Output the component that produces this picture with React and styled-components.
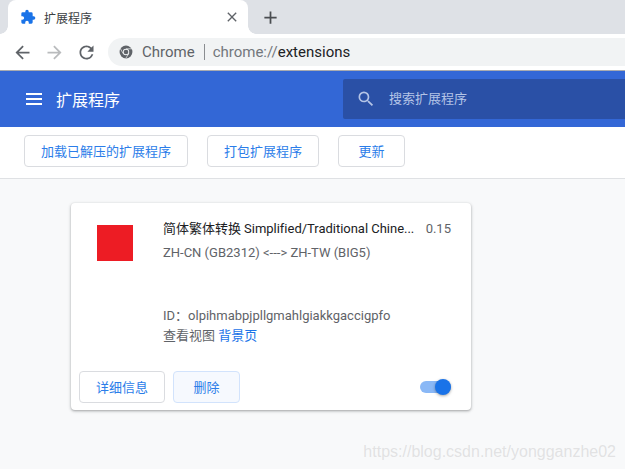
import React from "react";
import styled, { createGlobalStyle } from "styled-components";

const cjk = `Roboto, "Noto Sans CJK SC", sans-serif`;

const GlobalStyle = createGlobalStyle`
  html, body {
    margin: 0;
    padding: 0;
    background: #f8f9fa;
    overflow: hidden;
  }
  * {
    box-sizing: border-box;
  }
`;

const Page = styled.div`
  position: relative;
  width: 625px;
  height: 469px;
  overflow: hidden;
  font-family: ${cjk};
  display: flex;
  flex-direction: column;
`;

const TabStrip = styled.div`
  height: 34px;
  background: #dee1e6;
  display: flex;
  align-items: flex-start;
  padding-left: 8px;
`;

const Tab = styled.div`
  position: relative;
  width: 240px;
  height: 34px;
  background: #fff;
  border-radius: 8px 8px 0 0;
  display: flex;
  align-items: center;
  padding: 0 8px 0 12px;
  font-size: 12px;
  color: #3c4043;

  &::before,
  &::after {
    content: "";
    position: absolute;
    bottom: 0;
    width: 8px;
    height: 8px;
  }

  &::before {
    left: -8px;
    background: radial-gradient(circle at 0 0, transparent 7.5px, #fff 8px);
  }

  &::after {
    right: -8px;
    background: radial-gradient(circle at 100% 0, transparent 7.5px, #fff 8px);
  }
`;

const TabTitle = styled.span`
  margin-left: 8px;
  flex: 1;
`;

const NewTab = styled.div`
  width: 44px;
  height: 34px;
  display: flex;
  align-items: center;
  justify-content: center;
`;

const Toolbar = styled.div`
  height: 37px;
  background: #fff;
  border-bottom: 1px solid #a9abb0;
  display: flex;
  align-items: flex-start;
  padding: 4px 0 0 12px;
`;

const NavButton = styled.div`
  width: 32px;
  height: 28px;
  display: flex;
  align-items: center;
`;

const Omnibox = styled.div`
  flex: 1;
  height: 28px;
  background: #f1f3f4;
  border-radius: 14px 0 0 14px;
  display: flex;
  align-items: center;
  padding-left: 11px;
  font-size: 15px;
`;

const Origin = styled.span`
  margin-left: 9px;
  color: #5f6368;
`;

const Divider = styled.span`
  width: 1px;
  height: 16px;
  background: #8a8d91;
  margin: 0 8px 0 9px;
`;

const UrlScheme = styled.span`
  color: #73777c;
`;

const UrlPath = styled.span`
  color: #202124;
`;

const Header = styled.header`
  height: 56px;
  background: #3367d6;
  display: flex;
  align-items: center;
  padding-left: 26px;
  color: #fff;
`;

const HeaderTitle = styled.h1`
  margin: 0 0 0 14px;
  width: 287px;
  font-size: 16px;
  font-weight: 400;
`;

const SearchBox = styled.div`
  flex: 1;
  height: 40px;
  background: #2a50a6;
  border-radius: 2px 0 0 2px;
  display: flex;
  align-items: center;
  padding-left: 13px;
  color: #b4c4e6;
  font-size: 13px;
`;

const SearchLabel = styled.span`
  margin-left: 13px;
  padding-bottom: 4px;
`;

const ActionBar = styled.div`
  height: 52px;
  background: #fff;
  border-bottom: 1px solid #dfe1e4;
  display: flex;
  align-items: flex-start;
  gap: 19px;
  padding: 8px 0 0 24px;
`;

const Button = styled.button`
  height: 32px;
  width: ${(props) => props.$width}px;
  padding: 0;
  background: ${(props) => (props.$tinted ? "#f6f9fe" : "#fff")};
  border: 1px solid ${(props) => (props.$tinted ? "#d2e3fc" : "#dadce0")};
  border-radius: 4px;
  color: #2b7de9;
  font-family: ${cjk};
  font-size: 13px;
  line-height: 1;
`;

const Content = styled.main`
  flex: 1;
  padding: 24px 0 0 71px;
`;

const Card = styled.section`
  width: 400px;
  height: 207px;
  background: #fff;
  border-radius: 4px;
  box-shadow: 0 1px 2px rgba(60, 64, 67, 0.3), 0 1px 3px 1px rgba(60, 64, 67, 0.15);
  display: flex;
  flex-direction: column;
`;

const CardMain = styled.div`
  flex: 1;
  display: flex;
  padding: 22px 20px 0 26px;
`;

const ExtensionIcon = styled.div`
  width: 36px;
  height: 36px;
  background: #ed1c24;
  flex: none;
`;

const Details = styled.div`
  margin-left: 30px;
  min-width: 0;
  flex: 1;
  margin-top: -6px;
`;

const TitleRow = styled.div`
  display: flex;
  justify-content: space-between;
  line-height: 20px;
  height: 20px;
`;

const Name = styled.span`
  font-size: 13px;
  letter-spacing: -0.02px;
  color: #202124;
  white-space: nowrap;
`;

const Version = styled.span`
  font-size: 13px;
  color: #5f6368;
`;

const Description = styled.div`
  margin-top: 4px;
  font-size: 13px;
  line-height: 20px;
  color: #5f6368;
`;

const ExtensionId = styled.div`
  margin-top: 43px;
  font-size: 13px;
  line-height: 20px;
  color: #5f6368;
`;

const Views = styled.div`
  font-size: 13px;
  line-height: 20px;
  color: #5f6368;
`;

const ViewLink = styled.a`
  color: #1a73e8;
`;

const CardFooter = styled.div`
  height: 39px;
  display: flex;
  align-items: flex-start;
  gap: 8px;
  padding: 0 20px 0 8px;
`;

const Toggle = styled.div`
  position: relative;
  margin: 10px 0 0 auto;
  width: 31px;
  height: 12px;
  background: #8ab8f6;
  border-radius: 6px;
`;

const Knob = styled.div`
  position: absolute;
  top: -2px;
  right: 0;
  width: 16px;
  height: 16px;
  background: #1a73e8;
  border-radius: 50%;
  box-shadow: 0 1px 3px rgba(0, 0, 0, 0.35);
`;

const Watermark = styled.div`
  position: absolute;
  right: 9px;
  bottom: 8px;
  font-family: "Liberation Sans", sans-serif;
  font-size: 16px;
  color: rgba(190, 190, 190, 0.4);
`;

const Glyph = ({ d, size = 21, color = "#5f6368" }) => (
  <svg width={size} height={size} viewBox="0 0 24 24" fill={color}>
    <path d={d} />
  </svg>
);

const icons = {
  back: "M20 11H7.83l5.59-5.59L12 4l-8 8 8 8 1.41-1.41L7.83 13H20v-2z",
  forward: "M12 4l-1.41 1.41L16.17 11H4v2h12.17l-5.58 5.59L12 20l8-8z",
  reload:
    "M17.65 6.35A7.958 7.958 0 0 0 12 4c-4.42 0-7.99 3.58-7.99 8s3.57 8 7.99 8c3.73 0 6.84-2.55 7.73-6h-2.08A5.99 5.99 0 0 1 12 18c-3.31 0-6-2.69-6-6s2.69-6 6-6c1.66 0 3.14.69 4.22 1.78L13 11h7V4l-2.35 2.35z",
  close: "M19 6.41 17.59 5 12 10.59 6.41 5 5 6.41 10.59 12 5 17.59 6.41 19 12 13.41 17.59 19 19 17.59 13.41 12z",
  plus: "M19 13h-6v6h-2v-6H5v-2h6V5h2v6h6v2z",
  menu: "M0 3h24v3H0zM0 10.5h24v3H0zM0 18h24v3H0z",
  search:
    "M15.5 14h-.79l-.28-.27A6.47 6.47 0 0 0 16 9.5 6.5 6.5 0 1 0 9.5 16c1.61 0 3.09-.59 4.23-1.57l.27.28v.79l5 4.99L20.49 19l-4.99-5zm-6 0C7.01 14 5 11.99 5 9.5S7.01 5 9.5 5 14 7.01 14 9.5 11.99 14 9.5 14z",
  puzzle:
    "M20.5 11H19V7a2 2 0 0 0-2-2h-4V3.5a2.5 2.5 0 0 0-5 0V5H4a2 2 0 0 0-2 2v3.8h1.5a2.7 2.7 0 0 1 0 5.4H2V20a2 2 0 0 0 2 2h3.8v-1.5a2.7 2.7 0 0 1 5.4 0V22H17a2 2 0 0 0 2-2v-4h1.5a2.5 2.5 0 0 0 0-5z",
};

const ChromeIcon = () => (
  <svg width="14" height="14" viewBox="0 0 24 24">
    <circle cx="12" cy="12" r="11" fill="#5f6368" />
    <circle cx="12" cy="12" r="5.5" fill="#f1f3f4" />
    <circle cx="12" cy="12" r="4" fill="#5f6368" />
    <path d="M12 6.5h10M7.2 14.8 2.5 6.5M16.8 14.8 11.5 23" stroke="#f1f3f4" strokeWidth="1.2" />
  </svg>
);

const App = () => (
  <Page>
    <GlobalStyle />
    <TabStrip>
      <Tab>
        <Glyph d={icons.puzzle} size={16} color="#1a73e8" />
        <TabTitle>扩展程序</TabTitle>
        <Glyph d={icons.close} size={16} />
      </Tab>
      <NewTab>
        <Glyph d={icons.plus} size={21} color="#4a4d51" />
      </NewTab>
    </TabStrip>
    <Toolbar>
      <NavButton>
        <Glyph d={icons.back} />
      </NavButton>
      <NavButton>
        <Glyph d={icons.forward} color="#b9bbbd" />
      </NavButton>
      <NavButton>
        <Glyph d={icons.reload} />
      </NavButton>
      <Omnibox>
        <ChromeIcon />
        <Origin>Chrome</Origin>
        <Divider />
        <UrlScheme>chrome://</UrlScheme>
        <UrlPath>extensions</UrlPath>
      </Omnibox>
    </Toolbar>
    <Header>
      <Glyph d={icons.menu} size={16} color="#fff" />
      <HeaderTitle>扩展程序</HeaderTitle>
      <SearchBox>
        <Glyph d={icons.search} size={20} color="#b4c4e6" />
        <SearchLabel>搜索扩展程序</SearchLabel>
      </SearchBox>
    </Header>
    <ActionBar>
      <Button $width={164}>加载已解压的扩展程序</Button>
      <Button $width={112}>打包扩展程序</Button>
      <Button $width={67}>更新</Button>
    </ActionBar>
    <Content>
      <Card>
        <CardMain>
          <ExtensionIcon />
          <Details>
            <TitleRow>
              <Name>简体繁体转换 Simplified/Traditional Chine...</Name>
              <Version>0.15</Version>
            </TitleRow>
            <Description>ZH-CN (GB2312) &lt;---&gt; ZH-TW (BIG5)</Description>
            <ExtensionId>ID：olpihmabpjpllgmahlgiakkgaccigpfo</ExtensionId>
            <Views>
              查看视图 <ViewLink>背景页</ViewLink>
            </Views>
          </Details>
        </CardMain>
        <CardFooter>
          <Button $width={86}>详细信息</Button>
          <Button $tinted $width={67}>删除</Button>
          <Toggle>
            <Knob />
          </Toggle>
        </CardFooter>
      </Card>
    </Content>
    <Watermark>https://blog.csdn.net/yongganzhe02</Watermark>
  </Page>
);

export default App;
